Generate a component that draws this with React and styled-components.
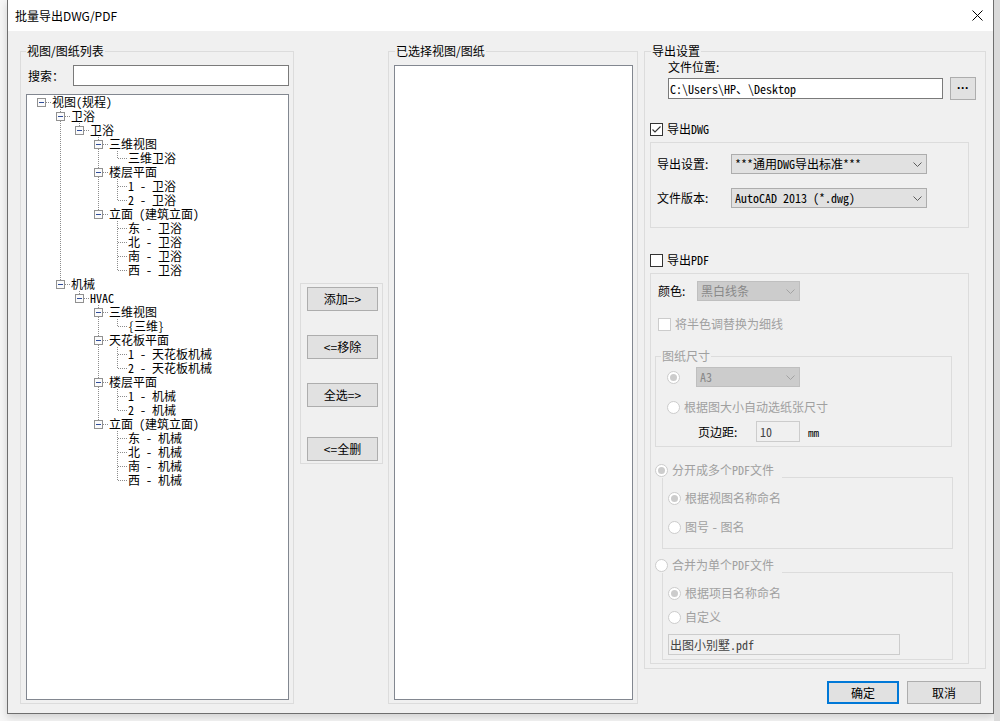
import React from 'react';
import styled, { createGlobalStyle } from 'styled-components';

const UI = `"Noto Sans CJK SC", "Microsoft YaHei", sans-serif`;
const SIM = `"Noto Sans Mono CJK SC", "Liberation Mono", "Noto Sans CJK SC", monospace`;

const GlobalStyle = createGlobalStyle`
  html, body { margin: 0; padding: 0; }
  body {
    width: 1000px;
    height: 721px;
    overflow: hidden;
    background: #f5f5f5;
    font-family: ${UI};
    font-size: 12px;
    color: #000;
  }
  * { box-sizing: border-box; }
`;

const Screen = styled.div`
  display: flex;
  width: 1000px;
  height: 721px;
`;

const Backdrop = styled.div`
  width: ${p => p.$w}px;
  flex: none;
  background: ${p => p.$bg};
`;

const Window = styled.div`
  flex: none;
  width: 987px;
  height: 714px;
  border: 1px solid #6e6e6e;
  border-top: 0;
  display: flex;
  flex-direction: column;
  box-shadow: 0 3px 8px rgba(0, 0, 0, 0.16);
`;

const TitleBar = styled.div`
  height: 31px;
  flex: none;
  background: #fff;
  display: flex;
  align-items: center;
  justify-content: space-between;
  padding: 0 10px 0 7px;
  line-height: 16px;
`;

const Body = styled.div`
  flex: 1;
  background: #f0f0f0;
  display: flex;
  align-items: stretch;
  padding: 12px 7px 9px 12px;
`;

const Group = styled.fieldset`
  margin: 0 0 0 ${p => p.$ml || 0}px;
  width: ${p => p.$w}px;
  flex: none;
  min-width: 0;
  border: 1px solid #dcdcdc;
  padding: ${p => p.$pad || '0'};
  display: flex;
  flex-direction: column;
`;

const Legend = styled.legend`
  padding: 0 1px;
  margin-left: ${p => p.$ml ?? 0}px;
  line-height: 16px;
  color: ${p => (p.$muted ? '#a0a0a0' : '#000')};
`;

const SearchRow = styled.div`
  display: flex;
  align-items: center;
  margin-top: 6px;
  padding-left: 2px;
`;

const FieldLabel = styled.span`
  width: ${p => p.$w}px;
  flex: none;
  line-height: 16px;
  color: ${p => (p.$muted ? '#a0a0a0' : '#000')};
`;

const TextBox = styled.div`
  height: 21px;
  flex: ${p => (p.$w ? 'none' : 1)};
  width: ${p => (p.$w ? `${p.$w}px` : 'auto')};
  border: 1px solid ${p => (p.$disabled ? '#cccccc' : '#7a7a7a')};
  background: ${p => (p.$disabled ? '#f0f0f0' : '#fff')};
  color: ${p => (p.$disabled ? '#444' : '#000')};
  font-family: ${SIM};
  line-height: 19px;
  padding-left: ${p => p.$pl ?? 2}px;
  white-space: nowrap;
  overflow: hidden;
`;

const TreeBox = styled.div`
  flex: 1;
  margin-top: 8px;
  background: #fff;
  border: 1px solid #828790;
  padding-left: 5px;
  font-family: ${SIM};
  overflow: hidden;
`;

const ListBox = styled.div`
  flex: 1;
  margin-top: 6px;
  background: #fff;
  border: 1px solid #828790;
`;

const V = 'repeating-linear-gradient(to bottom, #8c8c8c 0 1px, transparent 1px 2px)';
const H = 'repeating-linear-gradient(to right, #8c8c8c 0 1px, transparent 1px 2px)';

const TreeRow = styled.div`
  display: flex;
  height: 14px;
`;

const Guide = styled.div`
  width: 19px;
  flex: none;
  background: ${p => (p.$line ? `${V} 9px 0 / 1px 14px no-repeat` : 'none')};
`;

const NodeCell = styled.div`
  width: 19px;
  flex: none;
  background: ${p =>
    [
      `${H} 10px 7px / 9px 1px no-repeat`,
      p.$top ? `${V} 9px 0 / 1px 7px no-repeat` : null,
      p.$bottom ? `${V} 9px 8px / 1px 6px no-repeat` : null,
    ]
      .filter(Boolean)
      .join(', ')};
`;

const ExpanderIcon = styled.svg`
  display: block;
  margin: 3px 0 0 5px;
`;

const NodeText = styled.span`
  margin-left: 1px;
  line-height: 14px;
  font-size: 12px;
  white-space: nowrap;
`;

const ButtonColumn = styled.div`
  flex: none;
  align-self: center;
  width: 83px;
  height: 181px;
  margin-left: 6px;
  border: 1px solid #dcdcdc;
  padding: 3px 0 0 6px;
`;

const Button = styled.button`
  display: block;
  width: ${p => p.$w || 71}px;
  height: ${p => p.$h || 24}px;
  margin: ${p => p.$mt || 0}px 0 0 0;
  padding: 0;
  background: #e1e1e1;
  border: ${p => (p.$primary ? '2px solid #0078d7' : '1px solid #adadad')};
  font-family: ${UI};
  font-size: 12px;
  color: #000;
  line-height: 16px;
`;

const RightColumn = styled.div`
  flex: none;
  display: flex;
  flex-direction: column;
  margin-left: 6px;
`;

const Line = styled.div`
  line-height: 16px;
  margin-left: ${p => p.$ml || 0}px;
  margin-top: ${p => p.$mt || 0}px;
`;

const Row = styled.div`
  display: flex;
  align-items: center;
  margin-top: ${p => p.$mt || 0}px;
  padding-left: ${p => p.$pl || 0}px;
  min-height: 16px;
`;

const DotsButton = styled.div`
  width: 26px;
  height: 23px;
  margin-left: 7px;
  flex: none;
  background: #e1e1e1;
  border: 1px solid #adadad;
  display: flex;
  align-items: center;
  justify-content: center;
  font-family: "Liberation Sans", Arial, sans-serif;
  font-weight: bold;
  font-size: 12px;
  line-height: 1;
  padding-bottom: 1px;
`;

const Box = styled.div`
  width: 319px;
  border: 1px solid #dcdcdc;
  margin-top: ${p => p.$mt || 0}px;
  padding: ${p => p.$pad || '0'};
  display: flex;
  flex-direction: column;
`;

const SubGroup = styled.fieldset`
  margin: ${p => p.$mt || 0}px 0 0 ${p => p.$ml || 0}px;
  width: ${p => p.$w}px;
  min-width: 0;
  border: 1px solid #dcdcdc;
  padding: ${p => p.$pad || '0'};
  display: flex;
  flex-direction: column;
`;

/* radio button that heads a group box: the box's top rule starts after the label */
const OptionHeader = styled.div`
  display: flex;
  align-items: center;
  height: 16px;
  width: 298px;
  margin: ${p => p.$mt || 0}px 0 0 4px;
`;

const HeaderRule = styled.div`
  flex: 1;
  align-self: flex-end;
  height: 1px;
  margin-left: 8px;
  background: #dcdcdc;
`;

const OptionBody = styled.div`
  width: 291px;
  margin-left: 11px;
  border: 1px solid #dcdcdc;
  border-top: 0;
  padding: ${p => p.$pad || '0'};
  display: flex;
  flex-direction: column;
`;

const SelectBox = styled.div`
  width: ${p => p.$w}px;
  height: 20px;
  flex: none;
  display: flex;
  align-items: center;
  justify-content: space-between;
  padding: 0 4px 0 3px;
  border: 1px solid ${p => (p.$disabled ? '#bfbfbf' : '#adadad')};
  background: ${p => (p.$disabled ? '#cccccc' : '#e1e1e1')};
  color: ${p => (p.$disabled ? '#888' : '#000')};
  font-family: ${p => (p.$mono ? SIM : UI)};
  line-height: 18px;
  white-space: nowrap;
`;

const CheckSquare = styled.span`
  width: 13px;
  height: 13px;
  flex: none;
  display: flex;
  align-items: center;
  justify-content: center;
  border: 1px solid ${p => (p.$disabled ? '#cccccc' : '#333')};
  background: #fff;
`;

const RadioCircle = styled.span`
  width: 13px;
  height: 13px;
  flex: none;
  border-radius: 50%;
  border: 1px solid #cccccc;
  background: #fff;
  display: flex;
  align-items: center;
  justify-content: center;
  &::after {
    content: '';
    width: 7px;
    height: 7px;
    border-radius: 50%;
    background: ${p => (p.$checked ? '#cccccc' : 'transparent')};
  }
`;

const OptionText = styled.span`
  margin-left: ${p => p.$gap ?? 4}px;
  line-height: 16px;
  color: ${p => (p.$muted ? '#a0a0a0' : '#000')};
  white-space: nowrap;
`;

const Mono = styled.span`
  font-family: ${SIM};
  font-size: ${p => p.$size || 12}px;
  margin-left: ${p => p.$ml || 0}px;
`;

const Footer = styled.div`
  display: flex;
  justify-content: flex-end;
  gap: 8px;
  margin-top: 12px;
  padding-right: 5px;
`;

const Chevron = ({ muted }) => (
  <svg width="9" height="5" viewBox="0 0 9 5">
    <polyline points="0.5,0.5 4.5,4.5 8.5,0.5" fill="none" stroke={muted ? '#a3a3a3' : '#5c5c5c'} strokeWidth="1" />
  </svg>
);

const Select = ({ children, w, disabled, mono }) => (
  <SelectBox $w={w} $disabled={disabled} $mono={mono}>
    <span>{children}</span>
    <Chevron muted={disabled} />
  </SelectBox>
);

const Checkbox = ({ checked, disabled }) => (
  <CheckSquare $disabled={disabled}>
    {checked && (
      <svg width="11" height="11" viewBox="0 0 11 11">
        <polyline points="1.5,5.5 4,8 9.5,2.5" fill="none" stroke="#333" strokeWidth="1.1" />
      </svg>
    )}
  </CheckSquare>
);

const each = (dirs, suffix) => dirs.map(d => ({ label: `${d} - ${suffix}` }));

const tree = [
  {
    label: '视图(规程)',
    children: [
      {
        label: '卫浴',
        children: [
          {
            label: '卫浴',
            children: [
              { label: '三维视图', children: [{ label: '三维卫浴' }] },
              { label: '楼层平面', children: each(['1', '2'], '卫浴') },
              { label: '立面 (建筑立面)', children: each(['东', '北', '南', '西'], '卫浴') },
            ],
          },
        ],
      },
      {
        label: '机械',
        children: [
          {
            label: 'HVAC',
            children: [
              { label: '三维视图', children: [{ label: '{三维}' }] },
              { label: '天花板平面', children: each(['1', '2'], '天花板机械') },
              { label: '楼层平面', children: each(['1', '2'], '机械') },
              { label: '立面 (建筑立面)', children: each(['东', '北', '南', '西'], '机械') },
            ],
          },
        ],
      },
    ],
  },
];

function flatten(nodes, depth = 0, guides = [], out = []) {
  nodes.forEach((n, i) => {
    const hasNext = i < nodes.length - 1;
    out.push({ label: n.label, depth, guides, hasKids: !!n.children, top: depth > 0 || i > 0, bottom: hasNext });
    if (n.children) flatten(n.children, depth + 1, [...guides, hasNext], out);
  });
  return out;
}

const rows = flatten(tree);

function Tree() {
  return (
    <TreeBox>
      {rows.map((r, i) => (
        <TreeRow key={i}>
          {r.guides.map((g, k) => (
            <Guide key={k} $line={g} />
          ))}
          <NodeCell $top={r.top} $bottom={r.bottom}>
            {r.hasKids && (
              <ExpanderIcon width="9" height="9" viewBox="0 0 9 9">
                <rect x="0.5" y="0.5" width="8" height="8" fill="#fbfbfb" stroke="#919191" />
                <line x1="2" y1="4.5" x2="7" y2="4.5" stroke="#2f4d9a" />
              </ExpanderIcon>
            )}
          </NodeCell>
          <NodeText>{r.label}</NodeText>
        </TreeRow>
      ))}
    </TreeBox>
  );
}

export default function App() {
  return (
    <Screen>
      <GlobalStyle />
      <Backdrop $w={7} $bg="#f6f6f6" />
      <Window>
        <TitleBar>
          <span>批量导出DWG/PDF</span>
          <svg width="11" height="11" viewBox="0 0 11 11">
            <path d="M0.5 0.5 L10.5 10.5 M10.5 0.5 L0.5 10.5" stroke="#000" strokeWidth="1" />
          </svg>
        </TitleBar>
        <Body>
          <Group $w={274} $pad="0 4px 3px 5px">
            <Legend>视图/图纸列表</Legend>
            <SearchRow>
              <FieldLabel $w={45}>搜索：</FieldLabel>
              <TextBox />
            </SearchRow>
            <Tree />
          </Group>

          <ButtonColumn>
            <Button>添加=&gt;</Button>
            <Button $mt={24}>&lt;=移除</Button>
            <Button $mt={24}>全选=&gt;</Button>
            <Button $mt={30}>&lt;=全删</Button>
          </ButtonColumn>

          <Group $w={250} $ml={5} $pad="0 4px 3px 5px">
            <Legend $ml={1}>已选择视图/图纸</Legend>
            <ListBox />
          </Group>

          <RightColumn>
            <Group $w={342} $pad="0 16px 4px 5px">
              <Legend $ml={1}>导出设置</Legend>
              <Line $ml={18}>文件位置:</Line>
              <Row $mt={2} $pl={18}>
                <TextBox $w={275} $pl={1}>C:\Users\HP、\Desktop</TextBox>
                <DotsButton>···</DotsButton>
              </Row>
              <Row $mt={21}>
                <Checkbox checked />
                <OptionText>
                  导出<Mono>DWG</Mono>
                </OptionText>
              </Row>
              <Box $mt={5} $pad="11px 0 19px 6px">
                <Row>
                  <FieldLabel $w={74}>导出设置:</FieldLabel>
                  <Select w={196} mono>***通用DWG导出标准***</Select>
                </Row>
                <Row $mt={14}>
                  <FieldLabel $w={74}>文件版本:</FieldLabel>
                  <Select w={196} mono>AutoCAD 2013 (*.dwg)</Select>
                </Row>
              </Box>
              <Row $mt={24}>
                <Checkbox />
                <OptionText>
                  导出<Mono>PDF</Mono>
                </OptionText>
              </Row>
              <Box $mt={5} $pad="0 0 3px 0">
                <Row $mt={7} $pl={7}>
                  <FieldLabel $w={39}>颜色:</FieldLabel>
                  <Select w={103} disabled>黑白线条</Select>
                </Row>
                <Row $mt={15} $pl={7}>
                  <Checkbox disabled />
                  <OptionText $muted>将半色调替换为细线</OptionText>
                </Row>
                <SubGroup $w={297} $ml={4} $mt={16} $pad="0 0 4px 0">
                  <Legend $muted $ml={5}>图纸尺寸</Legend>
                  <Row $mt={3} $pl={11}>
                    <RadioCircle $checked />
                    <OptionText $gap={16}>
                      <Select w={104} disabled mono>A3</Select>
                    </OptionText>
                  </Row>
                  <Row $mt={12} $pl={11}>
                    <RadioCircle />
                    <OptionText $muted>根据图大小自动选纸张尺寸</OptionText>
                  </Row>
                  <Row $mt={6} $pl={42}>
                    <FieldLabel $w={58}>页边距:</FieldLabel>
                    <TextBox $w={44} $disabled $pl={3}>10</TextBox>
                    <Mono $size={11} $ml={8}>mm</Mono>
                  </Row>
                </SubGroup>

                <OptionHeader $mt={15}>
                  <RadioCircle $checked />
                  <OptionText $muted>
                    分开成多个<Mono>PDF</Mono>文件
                  </OptionText>
                  <HeaderRule />
                </OptionHeader>
                <OptionBody $pad="12px 0 13px 5px">
                  <Row>
                    <RadioCircle $checked />
                    <OptionText $muted>根据视图名称命名</OptionText>
                  </Row>
                  <Row $mt={13}>
                    <RadioCircle />
                    <OptionText $muted>
                      图号 <Mono>-</Mono> 图名
                    </OptionText>
                  </Row>
                </OptionBody>

                <OptionHeader $mt={8}>
                  <RadioCircle />
                  <OptionText $muted>
                    合并为单个<Mono>PDF</Mono>文件
                  </OptionText>
                  <HeaderRule />
                </OptionHeader>
                <OptionBody $pad="12px 0 4px 5px">
                  <Row>
                    <RadioCircle $checked />
                    <OptionText $muted>根据项目名称命名</OptionText>
                  </Row>
                  <Row $mt={8}>
                    <RadioCircle />
                    <OptionText $muted>自定义</OptionText>
                  </Row>
                  <Row $mt={9}>
                    <TextBox $w={232} $disabled $pl={1}>
                      <span style={{ fontFamily: UI }}>出图小别墅</span>.pdf
                    </TextBox>
                  </Row>
                </OptionBody>
              </Box>
            </Group>
            <Footer>
              <Button $primary $w={72} $h={23}>确定</Button>
              <Button $w={74} $h={23}>取消</Button>
            </Footer>
          </RightColumn>
        </Body>
      </Window>
      <Backdrop $w={6} $bg="#dadada" />
    </Screen>
  );
}
